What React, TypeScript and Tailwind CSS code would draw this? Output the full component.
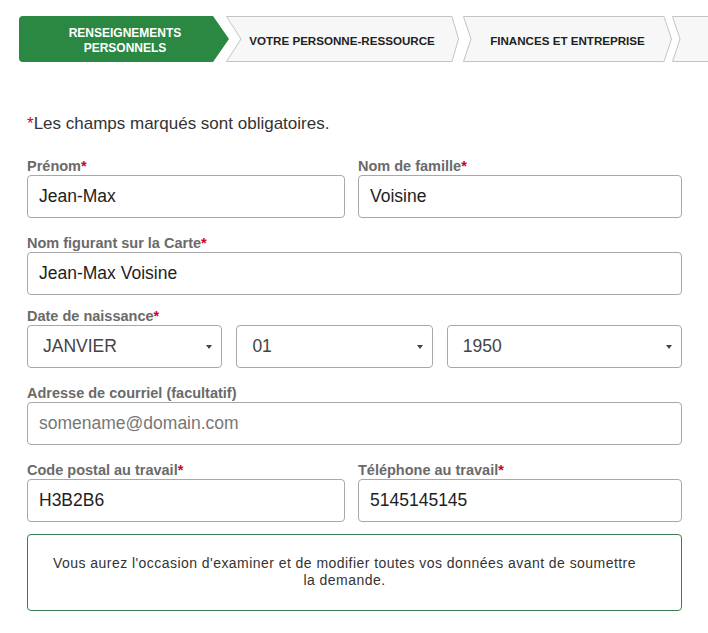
import React from "react";

const Req = () => <span className="text-[#d0021b]">*</span>;

function Label({ children, req }: { children: React.ReactNode; req?: boolean }) {
  return (
    <div className="h-[18px] leading-[18px] text-[14.5px] font-bold text-[#6a6a6a]">
      {children}
      {req && <Req />}
    </div>
  );
}

function Input({ value, placeholder }: { value?: string; placeholder?: string }) {
  return (
    <div className="h-[43px] rounded-[4px] border border-[#a8a8a8] bg-white flex items-center pl-[11px] text-[17.5px]">
      {value ? (
        <span className="text-[#1e1e1e]">{value}</span>
      ) : (
        <span className="text-[#777]">{placeholder}</span>
      )}
    </div>
  );
}

function Select({ value, w }: { value: string; w: string }) {
  return (
    <div
      className={`${w} h-[43px] rounded-[4px] border border-[#a8a8a8] bg-white flex items-center justify-between pl-[15px] pr-[8px] text-[17.5px] text-[#444]`}
    >
      <span>{value}</span>
      <svg width="8" height="6" viewBox="0 0 8 6">
        <polygon points="1,1 7,1 4,5" fill="#444" />
      </svg>
    </div>
  );
}

export default function App() {
  return (
    <div
      className="w-[708px] h-[633px] bg-white overflow-hidden"
      style={{ fontFamily: '"Liberation Sans", Arial, sans-serif' }}
    >
      {/* Stepper */}
      <div className="flex pt-[16px] pl-[19px] overflow-hidden">
        <div className="relative w-[210px] h-[46px] shrink-0">
          <svg className="absolute inset-0" width="210" height="46" viewBox="0 0 210 46">
            <path d="M4,0 H194 L210,23 L194,46 H4 Q0,46 0,42 V4 Q0,0 4,0 Z" fill="#2a8843" />
          </svg>
          <div className="relative h-full flex items-center justify-center pt-[3px] pl-[2px] text-white font-bold text-[12px] leading-[15px] text-center">
            RENSEIGNEMENTS
            <br />
            PERSONNELS
          </div>
        </div>
        <div className="relative w-[233px] h-[46px] shrink-0 ml-[-3px]">
          <svg className="absolute inset-0" width="233" height="46" viewBox="0 0 233 46">
            <polygon
              points="0.5,0.5 226,0.5 232.5,23 226,45.5 0.5,45.5 15,23"
              fill="#f7f7f7"
              stroke="#c4c4c4"
            />
          </svg>
          <div className="relative h-full flex items-center justify-center pt-[3px] pl-[10px] pr-[11px] text-[#222] font-bold text-[11.6px]">
            VOTRE PERSONNE-RESSOURCE
          </div>
        </div>
        <div className="relative w-[209px] h-[46px] shrink-0 ml-[4px]">
          <svg className="absolute inset-0" width="209" height="46" viewBox="0 0 209 46">
            <polygon
              points="0.5,0.5 201,0.5 208.5,23 201,45.5 0.5,45.5 8,23"
              fill="#f7f7f7"
              stroke="#c4c4c4"
            />
          </svg>
          <div className="relative h-full flex items-center justify-center pt-[3px] pl-[8px] pr-[8px] text-[#222] font-bold text-[11.6px]">
            FINANCES ET ENTREPRISE
          </div>
        </div>
        <div className="relative w-[80px] h-[46px] shrink-0">
          <svg className="absolute inset-0" width="80" height="46" viewBox="0 0 80 46">
            <polygon
              points="0.5,0.5 80,0.5 80,45.5 0.5,45.5 8,23"
              fill="#f7f7f7"
              stroke="#c4c4c4"
            />
          </svg>
        </div>
      </div>

      {/* Form */}
      <div className="w-[655px] ml-[27px] mt-[50px]">
        <div className="h-[24px] leading-[24px] text-[17px] text-[#333]">
          <Req />
          Les champs marqués sont obligatoires.
        </div>

        <div className="mt-[21px] grid grid-cols-[318px_324px] gap-x-[13px]">
          <div>
            <Label req>Prénom</Label>
            <Input value="Jean-Max" />
          </div>
          <div>
            <Label req>Nom de famille</Label>
            <Input value="Voisine" />
          </div>
        </div>

        <div className="mt-[16px]">
          <Label req>Nom figurant sur la Carte</Label>
          <Input value="Jean-Max Voisine" />
        </div>

        <div className="mt-[12px]">
          <Label req>Date de naissance</Label>
          <div className="flex gap-[14px]">
            <Select value="JANVIER" w="w-[196px]" />
            <Select value="01" w="w-[197px]" />
            <Select value="1950" w="w-[236px]" />
          </div>
        </div>

        <div className="mt-[16px]">
          <Label>Adresse de courriel (facultatif)</Label>
          <Input placeholder="somename@domain.com" />
        </div>

        <div className="mt-[16px] grid grid-cols-[318px_324px] gap-x-[13px]">
          <div>
            <Label req>Code postal au travail</Label>
            <Input value="H3B2B6" />
          </div>
          <div>
            <Label req>Téléphone au travail</Label>
            <Input value="5145145145" />
          </div>
        </div>

        <div className="mt-[12px] h-[77px] rounded-[4px] border border-[#3c7d50] pt-[20px] pl-[23px] pr-[43px] text-center text-[14px] leading-[17px] tracking-[0.45px] text-[#333]">
          Vous aurez l'occasion d'examiner et de modifier toutes vos données avant de soumettre
          la demande.
        </div>
      </div>
    </div>
  );
}
